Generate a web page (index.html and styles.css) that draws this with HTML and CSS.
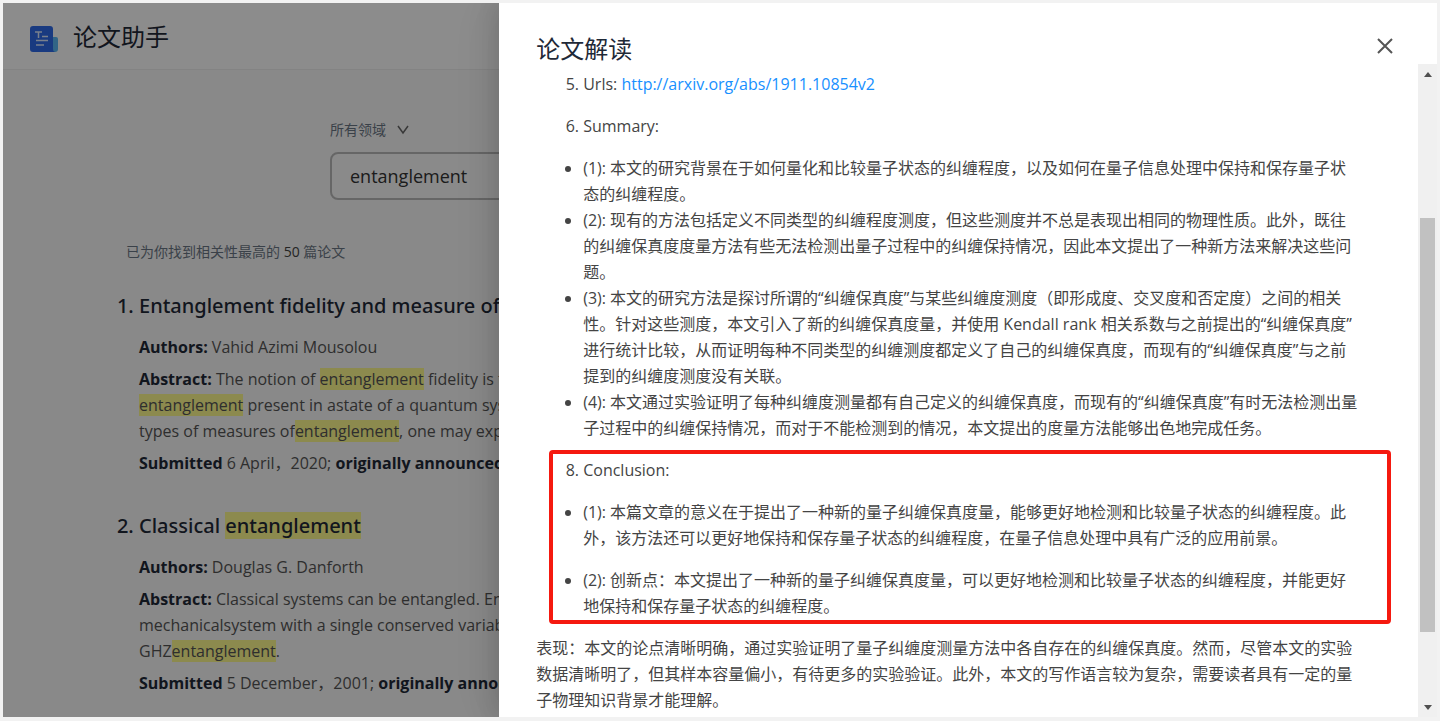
FILE: index.html
```
<!DOCTYPE html>
<html lang="zh-CN">
  <head>
    <meta charset="UTF-8">
    <meta name="viewport" content="width=device-width, initial-scale=1.0">
    <title>论文助手</title>
    <link rel="stylesheet" href="styles.css">
  </head>
  <body>
    <div class="app">
      <header class="app-header">
        <svg class="logo" viewBox="0 0 28 26" aria-hidden="true">
          <path d="M21 11h5a2 2 0 0 1 2 2v10a3 3 0 0 1-3 3h-6z" fill="#5cb8f5"/>
          <path d="M3 0h17a3 3 0 0 1 3 3v20a3 3 0 0 0 2 3H3a3 3 0 0 1-3-3V3a3 3 0 0 1 3-3z" fill="#2f6bea"/>
          <path d="M5 6h7M8.500 6v6M12 10.500h6M6 14.500h12M6 19h8" fill="none" stroke="#dce9ff" stroke-width="1.500"/>
        </svg>
        <h1>论文助手</h1>
      </header>

      <main>
        <form class="search">
          <div class="field">
            <select id="field" aria-label="领域">
              <option>所有领域</option>
            </select>
            <svg class="chevron" viewBox="0 0 12 10" aria-hidden="true"><path d="M1 1l5 7 5-7" fill="none" stroke="#666" stroke-width="1.500"/></svg>
          </div>
          <input class="search-input" type="text" aria-label="搜索" value="entanglement">
        </form>

        <p class="result-count">已为你找到相关性最高的 <span>50</span> 篇论文</p>

        <ol class="papers">
          <li class="paper">
            <h2>Entanglement fidelity and measure of</h2>
            <p><b>Authors:</b> Vahid Azimi Mousolou</p>
            <p><b>Abstract:</b> The notion of <mark>entanglement</mark> fidelity is to<br>
              <mark>entanglement</mark> present in astate of a quantum syst<br>
              types of measures of<mark>entanglement</mark>, one may expe</p>
            <p><b>Submitted</b> 6 April，2020; <b>originally announced</b></p>
          </li>
          <li class="paper">
            <h2>Classical <mark>entanglement</mark></h2>
            <p><b>Authors:</b> Douglas G. Danforth</p>
            <p><b>Abstract:</b> Classical systems can be entangled. Enta<br>
              mechanicalsystem with a single conserved variable<br>
              GHZ<mark>entanglement</mark>.</p>
            <p><b>Submitted</b> 5 December，2001; <b>originally annou</b></p>
          </li>
        </ol>
      </main>

      <div class="mask"></div>

      <section class="drawer" role="dialog" aria-labelledby="drawer-title">
        <div class="drawer-header">
          <h2 id="drawer-title">论文解读</h2>
          <button class="close" type="button" aria-label="关闭">
            <svg viewBox="0 0 16 16"><path d="M1 1l14 14M15 1L1 15" fill="none" stroke="#555" stroke-width="2"/></svg>
          </button>
        </div>
        <div class="drawer-body">
          <div class="content">
            <ol start="5">
              <li><p>Urls: <a href="http://arxiv.org/abs/1911.10854v2">http://arxiv.org/abs/1911.10854v2</a></p></li>
              <li><p>Summary:</p></li>
            </ol>
            <ul>
              <li>(1): 本文的研究背景在于如何量化和比较量子状态的纠缠程度，以及如何在量子信息处理中保持和保存量子状<br>态的纠缠程度。</li>
              <li>(2): 现有的方法包括定义不同类型的纠缠程度测度，但这些测度并不总是表现出相同的物理性质。此外，既往<br>的纠缠保真度度量方法有些无法检测出量子过程中的纠缠保持情况，因此本文提出了一种新方法来解决这些问<br>题。</li>
              <li>(3): 本文的研究方法是探讨所谓的“纠缠保真度”与某些纠缠度测度（即形成度、交叉度和否定度）之间的相关<br>性。针对这些测度，本文引入了新的纠缠保真度量，并使用 Kendall rank 相关系数与之前提出的“纠缠保真度”<br>进行统计比较，从而证明每种不同类型的纠缠测度都定义了自己的纠缠保真度，而现有的“纠缠保真度”与之前<br>提到的纠缠度测度没有关联。</li>
              <li>(4): 本文通过实验证明了每种纠缠度测量都有自己定义的纠缠保真度，而现有的“纠缠保真度”有时无法检测出量<br>子过程中的纠缠保持情况，而对于不能检测到的情况，本文提出的度量方法能够出色地完成任务。</li>
            </ul>
            <div class="conclusion">
              <ol start="8">
                <li><p>Conclusion:</p></li>
              </ol>
              <ul>
                <li><p>(1): 本篇文章的意义在于提出了一种新的量子纠缠保真度量，能够更好地检测和比较量子状态的纠缠程度。此<br>外，该方法还可以更好地保持和保存量子状态的纠缠程度，在量子信息处理中具有广泛的应用前景。</p></li>
                <li><p>(2): 创新点：本文提出了一种新的量子纠缠保真度量，可以更好地检测和比较量子状态的纠缠程度，并能更好<br>地保持和保存量子状态的纠缠程度。</p></li>
              </ul>
            </div>
            <p>表现：本文的论点清晰明确，通过实验证明了量子纠缠度测量方法中各自存在的纠缠保真度。然而，尽管本文的实验<br>数据清晰明了，但其样本容量偏小，有待更多的实验验证。此外，本文的写作语言较为复杂，需要读者具有一定的量<br>子物理知识背景才能理解。</p>
          </div>
          <div class="scrollbar" aria-hidden="true">
            <svg viewBox="0 0 8 5"><path d="M0 5l4-5 4 5z" fill="#505050"/></svg>
            <div class="track"><div class="thumb"></div></div>
            <svg viewBox="0 0 8 5"><path d="M0 0l4 5 4-5z" fill="#505050"/></svg>
          </div>
        </div>
      </section>
    </div>
  </body>
</html>
```
FILE: styles.css
```
* {
  box-sizing: border-box;
}

body {
  margin: 0;
  padding: 3px 3px 4px;
  height: 100vh;
  background-color: #f2f2f2;
  font-family: "Open Sans", "Noto Sans CJK SC", sans-serif;
  font-size: 16px;
  line-height: 26px;
  color: #444;
}

h1, h2, p, ol, ul {
  margin: 0;
  padding: 0;
}

.app {
  position: relative;
  height: 100%;
  overflow: hidden;
  background-color: #f9f9f9;
}

.app-header {
  display: flex;
  align-items: center;
  gap: 15px;
  height: 67px;
  padding: 2px 27px 0;
  background-color: #fff;
  border-bottom: 1px solid #eee;
}

.app-header h1 {
  font-size: 24px;
  font-weight: 400;
  color: #1f2937;
}

.logo {
  width: 28px;
  height: 26px;
  margin-top: 4px;
}

.search {
  width: 780px;
  margin: 47px auto 0;
}

.field {
  display: flex;
  align-items: center;
  height: 26px;
}

.field select {
  appearance: none;
  border: none;
  padding: 0;
  width: 67px;
  background: none;
  font: inherit;
  font-size: 14px;
  color: #6b7785;
}

.chevron {
  width: 12px;
  height: 10px;
}

.search-input {
  width: 100%;
  height: 48px;
  margin-top: 9px;
  padding: 0 18px;
  border: 2px solid #bbb;
  border-radius: 8px;
  background-color: #fbfbfb;
  font: inherit;
  font-size: 18px;
  color: #333;
}

.result-count {
  margin: 39px 0 0 123px;
  font-size: 14px;
  color: #6b7785;
}

.result-count span {
  color: #444;
}

.papers {
  margin: 25px 0 0 136px;
  white-space: nowrap;
  list-style-position: outside;
}

.paper {
  margin-bottom: 34px;
  font-size: 16px;
  color: #555;
}

.paper::marker {
  font-family: "Noto Sans", sans-serif;
  font-size: 20px;
  font-weight: 500;
  color: #1f2937;
}

.paper h2 {
  margin-bottom: 12px;
  font-family: "Noto Sans", sans-serif;
  font-size: 20px;
  font-weight: 500;
  line-height: 32px;
  color: #1f2937;
}

.paper p + p {
  margin-top: 6px;
}

.paper b {
  font-weight: 700;
  color: #1f2937;
}

mark {
  background-color: #fffb8f;
  color: inherit;
}

.mask {
  position: absolute;
  inset: 0;
  background-color: rgba(0, 0, 0, 0.45);
}

/* Drawer */
.drawer {
  position: absolute;
  top: 0;
  right: 0;
  bottom: 0;
  width: 65.4%;
  display: flex;
  flex-direction: column;
  background-color: #fff;
  box-shadow: -6px 0 16px rgba(0, 0, 0, 0.08), -9px 0 28px rgba(0, 0, 0, 0.05), -12px 0 48px rgba(0, 0, 0, 0.03);
}

.drawer-header {
  display: flex;
  justify-content: space-between;
  align-items: flex-end;
  height: 61px;
  padding: 0 44px 0 37px;
}

.drawer-header h2 {
  font-size: 24px;
  font-weight: 400;
  line-height: 30px;
  color: #1f2937;
}

.close {
  display: flex;
  align-items: center;
  height: 36px;
  padding: 0;
  border: none;
  background: none;
}

.close svg {
  width: 16px;
  height: 16px;
}

.drawer-body {
  flex: 1;
  min-height: 0;
  display: flex;
}

.content {
  flex: 1;
  padding: 7px 27px 0 37px;
  overflow: hidden;
  white-space: nowrap;
}

.content ol,
.content ul {
  padding-left: 47px;
  margin-bottom: 16px;
}

.content li p + p,
.content li:not(:last-child) p {
  margin-bottom: 16px;
}

.content a {
  color: #1890ff;
  text-decoration: none;
}

.conclusion {
  position: relative;
}

/* red frame around the conclusion */
.conclusion::before {
  content: "";
  position: absolute;
  inset: -7px 0 -5px 13px;
  border: 4px solid #f5190f;
  border-radius: 4px;
}

.scrollbar {
  display: flex;
  flex-direction: column;
  align-items: center;
  width: 19px;
  padding: 8px 0 7px;
  background-color: #f0f0f0;
}

.scrollbar svg {
  width: 8px;
  height: 5px;
}

.track {
  flex: 1;
  width: 100%;
  padding: 0 2px;
}

.thumb {
  height: 66%;
  margin-top: 141px;
  background-color: #c1c1c1;
}
```
